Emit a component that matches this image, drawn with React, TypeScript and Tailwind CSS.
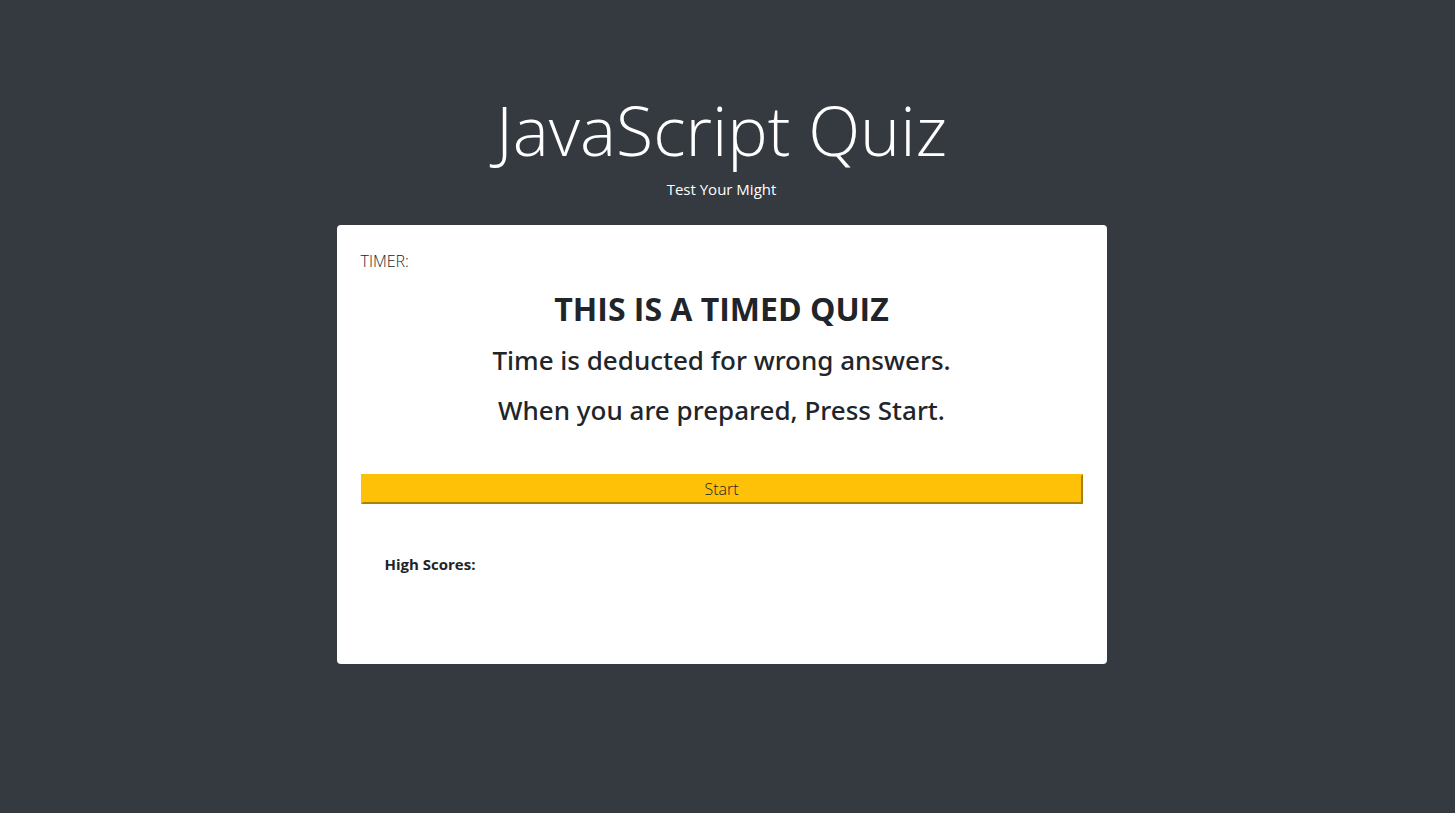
export default function App() {
  return (
    <div className="min-h-screen bg-[#343a40] px-3 font-['Open_Sans','Noto_Sans',sans-serif] text-[#212529]">
      <div className="pr-3">
        <main className="mx-auto w-full max-w-[770px] py-[82px]">
          <header className="text-center text-white">
            <h1 className="text-[68px] leading-[95px] font-light">JavaScript Quiz</h1>
            <p className="text-[15px] leading-6">Test Your Might</p>
          </header>
          <section className="mt-6 rounded bg-white p-6">
            <p className="text-base leading-6 font-light">TIMER:</p>
            <div className="mt-[18px] space-y-4 text-center">
              <h2 className="text-[32px] leading-9 font-bold">THIS IS A TIMED QUIZ</h2>
              <h3 className="font-['Noto_Sans','Open_Sans',sans-serif] text-[26px] leading-[34px] font-medium">Time is deducted for wrong answers.</h3>
              <h3 className="font-['Noto_Sans','Open_Sans',sans-serif] text-[26px] leading-[34px] font-medium">When you are prepared, Press Start.</h3>
            </div>
            <button
              type="button"
              className="mt-[47px] block w-full border-2 border-t-[#ffc107] border-r-[#aa8005] border-b-[#aa8005] border-l-[#ffc107] bg-[#ffc107] px-1.5 py-px text-base leading-6 font-light"
            >
              Start
            </button>
            <div className="mt-6 px-6 pt-6 pb-16">
              <h4 className="text-[15px] leading-6 font-bold">High Scores:</h4>
            </div>
          </section>
        </main>
      </div>
    </div>
  );
}
